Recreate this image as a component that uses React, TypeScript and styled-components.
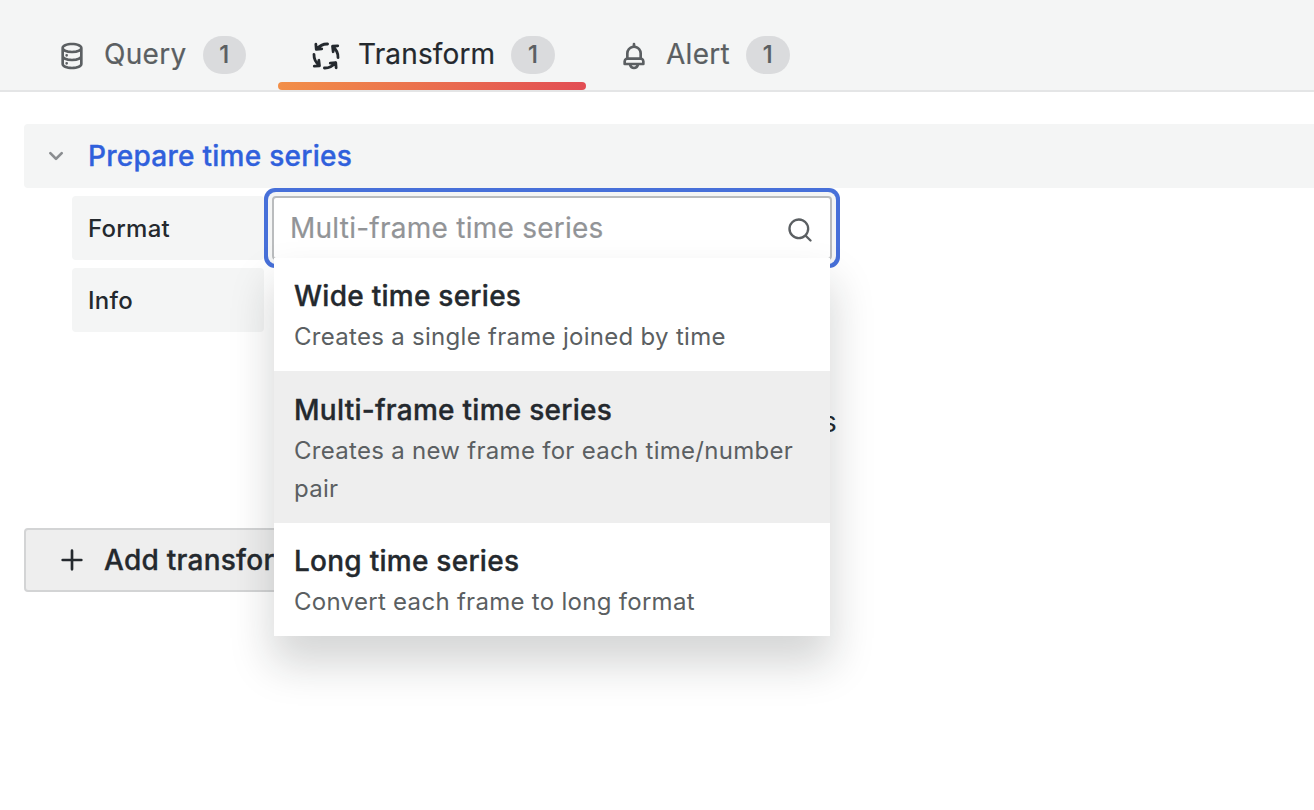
import React from 'react';
import styled, { createGlobalStyle, css } from 'styled-components';

const GlobalStyle = createGlobalStyle`
  *, *::before, *::after { box-sizing: border-box; }
  body {
    margin: 0;
    background: #ffffff;
    overflow: hidden;
    color: #24292e;
    font-family: Inter, "Liberation Sans", sans-serif;
    font-size: 28px;
    line-height: 44px;
    letter-spacing: 0.25px;
    -webkit-font-smoothing: antialiased;
  }
`;

const strongText = css`
  font-weight: 500;
  letter-spacing: 0.26px;
  -webkit-text-stroke: 0.35px currentColor;
`;

const Page = styled.div`
  height: 810px;
  overflow: hidden;
`;

const TabsBar = styled.nav`
  display: flex;
  gap: 4px;
  height: 92px;
  padding: 18px 0 0 28px;
  background: #f4f5f5;
  border-bottom: 2px solid #e4e5e6;
`;

const Tab = styled.div<{ $active?: boolean; $width: number }>`
  position: relative;
  display: flex;
  align-items: center;
  flex: none;
  width: ${(p) => p.$width}px;
  height: 72px;
  padding-left: ${(p) => (p.$active ? 32 : 28)}px;
  color: ${(p) => (p.$active ? '#24292e' : '#5b5f62')};
  letter-spacing: ${(p) => (p.$active ? 0.15 : 0.3)}px;
  -webkit-text-stroke: 0.2px currentColor;
  ${(p) =>
    p.$active &&
    css`
      &::after {
        content: '';
        position: absolute;
        left: 0;
        right: 0;
        bottom: 0;
        height: 8px;
        border-radius: 4px;
        background: linear-gradient(90deg, #f28f48 0%, #e24d54 100%);
      }
    `}
`;

const TabLabel = styled.span`
  margin-left: 16px;
`;

const Counter = styled.span`
  width: 43.5px;
  height: 38px;
  margin: 2px 0 0 16px;
  border-radius: 19px;
  background: #dadbdd;
  color: #5b5f62;
  font-size: 24px;
  font-weight: 500;
  line-height: 38px;
  text-align: center;
`;

const Icon = styled.svg<{ $size?: number }>`
  flex: none;
  display: block;
  width: ${(p) => p.$size ?? 32}px;
  height: ${(p) => p.$size ?? 32}px;
  fill: currentColor;
`;

const TabIcon = styled(Icon)`
  margin-top: 4px;
`;

const SearchIcon = styled(Icon)`
  margin-top: 3px;
`;

const Content = styled.main`
  padding: 32px 0 0 24px;
`;

const SectionHeader = styled.header`
  display: flex;
  align-items: center;
  height: 64px;
  padding-left: 16px;
  border-radius: 4px 0 0 4px;
  background: #f4f5f5;
  color: #8a8d90;
`;

const SectionTitle = styled.h2`
  margin: 0 0 0 16px;
  color: #2f60dc;
  font-size: 28px;
  line-height: 44px;
  ${strongText}
`;

const Fields = styled.div`
  display: flex;
  flex-direction: column;
  gap: 8px;
  height: 340px;
  padding: 8px 0 0 48px;
`;

const FieldRow = styled.div`
  display: flex;
  align-items: flex-start;
  gap: 8px;
`;

const FieldLabel = styled.label`
  flex: none;
  width: 192px;
  height: 64px;
  padding-left: 16px;
  border-radius: 4px;
  background: #f4f5f5;
  font-size: 24px;
  font-weight: 500;
  line-height: 66px;
`;

const Select = styled.div`
  position: relative;
  display: flex;
  align-items: center;
  justify-content: space-between;
  width: 560px;
  height: 64px;
  padding: 0 16px;
  border: 2px solid #babcbe;
  border-radius: 4px;
  background: #ffffff;
  box-shadow: 0 0 0 4px #f4f5f5, 0 0 0 8px #4770d9;
  color: #5b5f62;
`;

const Placeholder = styled.span`
  color: #929497;
  -webkit-text-stroke: 0.2px currentColor;
`;

const Menu = styled.div`
  position: absolute;
  z-index: 1;
  top: 60px;
  left: 0;
  width: 556px;
  background: #ffffff;
  box-shadow: 0 26px 40px 2px rgba(24, 26, 27, 0.18);
`;

const Option = styled.div<{ $selected?: boolean }>`
  padding: ${(p) => (p.$selected ? 17 : 16)}px 20px 15px;
  background: ${(p) => (p.$selected ? '#eeeeee' : '#ffffff')};
`;

const OptionTitle = styled.div`
  color: #24292e;
  line-height: 44px;
  ${strongText}
`;

const OptionText = styled.div`
  color: #5b5f62;
  font-size: 24px;
  line-height: 38px;
  letter-spacing: 0.29px;
`;

const InfoText = styled.p`
  width: 565px;
  margin: 132px 0 0;
  text-align: right;
`;

const AddButton = styled.button`
  display: flex;
  align-items: center;
  height: 64px;
  padding: 0 30px;
  border: 2px solid #d3d4d5;
  border-radius: 4px;
  background: #eeeeee;
  color: #24292e;
  font: inherit;
  ${strongText}
`;

const ButtonLabel = styled.span`
  margin-left: 16px;
`;

const paths = {
  database:
    'M8,16.5a1,1,0,1,0,1,1A1,1,0,0,0,8,16.5ZM12,2C8,2,4,3.37,4,6V18c0,2.63,4,4,8,4s8-1.37,8-4V6C20,3.37,16,2,12,2Zm6,16c0,.71-2.28,2-6,2s-6-1.29-6-2V14.73A13.16,13.16,0,0,0,12,16a13.16,13.16,0,0,0,6-1.27Zm0-6c0,.71-2.28,2-6,2s-6-1.29-6-2V8.73A13.16,13.16,0,0,0,12,10a13.16,13.16,0,0,0,6-1.27ZM12,8C8.28,8,6,6.71,6,6s2.28-2,6-2,6,1.29,6,2S15.72,8,12,8ZM8,10.5a1,1,0,1,0,1,1A1,1,0,0,0,8,10.5Z',
  bell: 'M18,13.18V10a6,6,0,0,0-5-5.91V3a1,1,0,0,0-2,0V4.09A6,6,0,0,0,6,10v3.18A3,3,0,0,0,4,16v2a1,1,0,0,0,1,1H8.14a4,4,0,0,0,7.72,0H19a1,1,0,0,0,1-1V16A3,3,0,0,0,18,13.18ZM8,10a4,4,0,0,1,8,0v3H8Zm4,10a2,2,0,0,1-1.72-1h3.44A2,2,0,0,1,12,20Zm6-3H6V16a1,1,0,0,1,1-1H17a1,1,0,0,1,1,1Z',
  search:
    'M21.71,20.29,18,16.61A9,9,0,1,0,16.61,18l3.68,3.68a1,1,0,0,0,1.42,0A1,1,0,0,0,21.71,20.29ZM11,18a7,7,0,1,1,7-7A7,7,0,0,1,11,18Z',
  angleDown:
    'M17,9.17a1,1,0,0,0-1.41,0L12,12.71,8.46,9.17a1,1,0,0,0-1.41,0,1,1,0,0,0,0,1.42l4.24,4.24a1,1,0,0,0,1.42,0L17,10.59A1,1,0,0,0,17,9.17Z',
  plus: 'M19,11H13V5a1,1,0,0,0-2,0v6H5a1,1,0,0,0,0,2h6v6a1,1,0,0,0,2,0V13h6a1,1,0,0,0,0-2Z',
};

const CycleArrow = () => (
  <path
    d="M13.2 3C10.3 2.9 7.2 4.2 5 6.9M4.4 3.2L4.7 7.1L8.8 6.6"
    fill="none"
    stroke="currentColor"
    strokeWidth="2.1"
    strokeLinecap="round"
    strokeLinejoin="round"
  />
);

const options = [
  { title: 'Wide time series', text: 'Creates a single frame joined by time' },
  { title: 'Multi-frame time series', text: 'Creates a new frame for each time/number pair', selected: true },
  { title: 'Long time series', text: 'Convert each frame to long format' },
];

export default function App() {
  return (
    <Page>
      <GlobalStyle />
      <TabsBar>
        <Tab $width={246}>
          <TabIcon viewBox="0 0 24 24"><path d={paths.database} /></TabIcon>
          <TabLabel>Query</TabLabel>
          <Counter>1</Counter>
        </Tab>
        <Tab $width={308} $active>
          <TabIcon viewBox="0 0 24 24">
            {[0, 90, 180, 270].map((angle) => (
              <g key={angle} transform={`rotate(${angle} 12 12)`}><CycleArrow /></g>
            ))}
          </TabIcon>
          <TabLabel>Transform</TabLabel>
          <Counter>1</Counter>
        </Tab>
        <Tab $width={240}>
          <TabIcon viewBox="0 0 24 24"><path d={paths.bell} /></TabIcon>
          <TabLabel>Alert</TabLabel>
          <Counter>1</Counter>
        </Tab>
      </TabsBar>
      <Content>
        <SectionHeader>
          <Icon viewBox="0 0 24 24"><path d={paths.angleDown} /></Icon>
          <SectionTitle>Prepare time series</SectionTitle>
        </SectionHeader>
        <Fields>
          <FieldRow>
            <FieldLabel>Format</FieldLabel>
            <Select>
              <Placeholder>Multi-frame time series</Placeholder>
              <SearchIcon viewBox="0 0 24 24" $size={28}><path d={paths.search} /></SearchIcon>
              <Menu>
                {options.map((option) => (
                  <Option key={option.title} $selected={option.selected}>
                    <OptionTitle>{option.title}</OptionTitle>
                    <OptionText>{option.text}</OptionText>
                  </Option>
                ))}
              </Menu>
            </Select>
          </FieldRow>
          <FieldRow>
            <FieldLabel>Info</FieldLabel>
            <InfoText>String values are labels</InfoText>
          </FieldRow>
        </Fields>
        <AddButton>
          <Icon viewBox="0 0 24 24"><path d={paths.plus} /></Icon>
          <ButtonLabel>Add transformation</ButtonLabel>
        </AddButton>
      </Content>
    </Page>
  );
}
